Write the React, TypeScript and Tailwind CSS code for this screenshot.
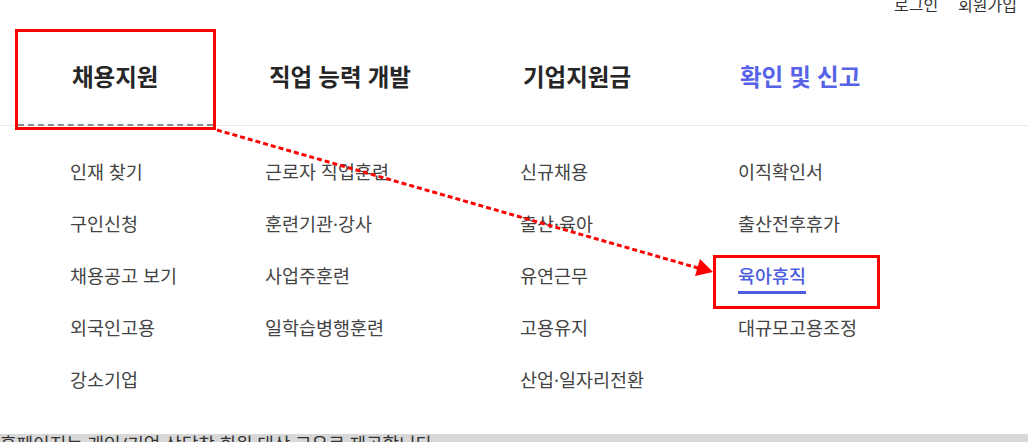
const font = { fontFamily: '"Noto Sans", "Noto Sans CJK KR", sans-serif' };

const tabs = [
  { title: '채용지원', width: 'w-[195px]', pad: 'pl-[2px]', active: false },
  { title: '직업 능력 개발', width: 'w-[255px]', pad: 'pl-[4px]', active: false },
  { title: '기업지원금', width: 'w-[218px]', pad: 'pl-[3px]', active: false },
  { title: '확인 및 신고', width: 'w-[260px]', pad: 'pl-[2px]', active: true },
];

const menus: string[][] = [
  ['인재 찾기', '구인신청', '채용공고 보기', '외국인고용', '강소기업'],
  ['근로자 직업훈련', '훈련기관·강사', '사업주훈련', '일학습병행훈련'],
  ['신규채용', '출산·육아', '유연근무', '고용유지', '산업·일자리전환'],
  ['이직확인서', '출산전후휴가', '육아휴직', '대규모고용조정'],
];

export default function App() {
  return (
    <div className="relative flex h-[442px] w-[1028px] flex-col overflow-hidden bg-white" style={font}>
      {/* Utility links */}
      <div className="flex h-[30px] shrink-0 items-start justify-end gap-[20px] pr-[11px]">
        <a className="-mt-[5px] text-[16px] leading-[20px] text-[#333]">로그인</a>
        <a className="-mt-[5px] text-[16px] leading-[20px] text-[#333]">회원가입</a>
      </div>

      {/* Main nav */}
      <div className="flex h-[96px] shrink-0 items-center border-b border-[#ebebeb] pb-[2px] pl-[70px]">
        {tabs.map((t) => (
          <div key={t.title} className={`${t.width} ${t.pad}`}>
            <span
              className={`text-[23.5px] font-bold leading-[30px] ${
                t.active ? 'text-[#5763e6]' : 'text-[#262626]'
              }`}
            >
              {t.title}
            </span>
          </div>
        ))}
      </div>

      {/* Sub menus */}
      <div className="flex h-[308px] shrink-0 pl-[70px] pt-[20px]">
        {menus.map((items, i) => (
          <ul key={i} className={tabs[i].width}>
            {items.map((item) => (
              <li key={item} className="h-[52px] text-[18.5px] leading-[52px]">
                {item === '육아휴직' ? (
                  <a className="font-medium text-[#4c5de0] underline decoration-[3px] underline-offset-[8px]">
                    {item}
                  </a>
                ) : (
                  <a className="text-[#444]">{item}</a>
                )}
              </li>
            ))}
          </ul>
        ))}
      </div>

      {/* Partially visible notice below */}
      <div className="h-[30px] shrink-0 bg-[#d8d8d8]">
        <p className="-mt-[5px] whitespace-nowrap text-[18px] leading-[30px] text-[#333]">
          홈페이지는 개인/기업 상담창 회원 대상 고유로 제공합니다.
        </p>
      </div>

      {/* Annotation: active tab box */}
      <div className="absolute left-[15px] top-[29px] h-[101px] w-[201px] border-[3px] border-[#ff0000]">
        <div className="absolute bottom-[1px] left-0 right-0 border-b-2 border-dashed border-[#8a8a8a]" />
      </div>

      {/* Annotation: target box */}
      <div className="absolute left-[713px] top-[255px] h-[54px] w-[167px] border-[3px] border-[#ff0000]" />

      {/* Annotation: arrow */}
      <svg className="pointer-events-none absolute left-0 top-0" width="1028" height="442">
        <line
          x1="217"
          y1="130"
          x2="698"
          y2="268"
          stroke="#ff0000"
          strokeWidth="3"
          strokeDasharray="5 3"
        />
        <polygon points="713,272 695,276 700,259" fill="#ff0000" />
      </svg>
    </div>
  );
}
